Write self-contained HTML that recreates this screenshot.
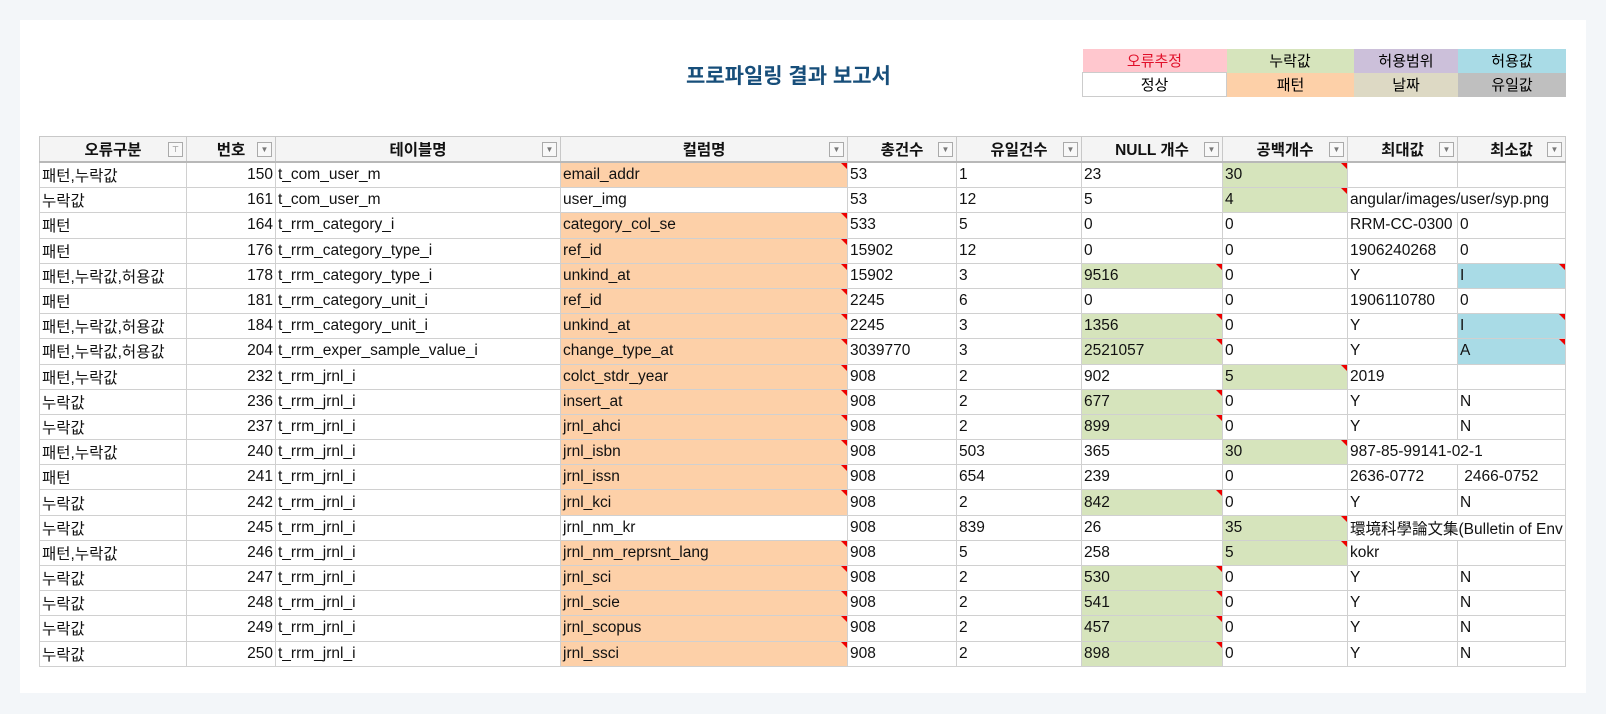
<!DOCTYPE html>
<html><head><meta charset="utf-8"><style>
body{margin:0;background:#f3f6f9;width:1606px;height:714px;overflow:hidden;font-family:"Liberation Sans","Noto Sans CJK KR",sans-serif;}
.card{position:absolute;left:20px;top:20px;width:1566px;height:673px;background:#fff;}
.title{position:absolute;left:686px;top:60px;font-size:21px;font-weight:bold;color:#174e7a;}
.leg{position:absolute;left:1082px;top:49px;border-collapse:collapse;font-size:15px;}
.leg td{text-align:center;padding:0;}
table.t{position:absolute;left:39px;top:136px;width:1526px;border-collapse:collapse;table-layout:fixed;font-size:15.5px;color:#111;}
.t td{height:24.2px;padding:0 2px;border:1px solid #d0d0d0;white-space:nowrap;overflow:visible;position:relative;}
.t th{height:22px;border:1px solid #c8c8c8;border-bottom:2px solid #b8b8b8;background:#f4f4f4;font-weight:bold;position:relative;text-align:center;font-size:15.5px;}
.dd{position:absolute;right:3px;top:5px;width:13px;height:13px;border:1px solid #aaa;background:#f8f8f8;font-size:8px;line-height:13px;color:#777;text-align:center;font-weight:normal;}
.r{text-align:right;}
.o{background:#fdd0a8;}.g{background:#d6e4bc;}.b{background:#a9dbe6;}
.tri::after{content:"";position:absolute;right:0;top:0;border-top:6px solid #e00;border-left:6px solid transparent;}
</style></head><body>
<div class="card"></div>
<div class="title">프로파일링 결과 보고서</div>
<table class="leg">
<tr><td style="width:144px;height:23px;background:#ffc7ce;color:#e0102a">오류추정</td><td style="width:127px;background:#d6e4bc">누락값</td><td style="width:104px;background:#ccc0da">허용범위</td><td style="width:108px;background:#a9dbe6">허용값</td></tr>
<tr><td style="height:23px;background:#fff;border:1px solid #ccc">정상</td><td style="background:#fdd0a8">패턴</td><td style="background:#ddd9c4">날짜</td><td style="background:#bfbfbf">유일값</td></tr>
</table>
<table class="t">
<colgroup><col style="width:147px"><col style="width:89px"><col style="width:285px"><col style="width:287px"><col style="width:109px"><col style="width:125px"><col style="width:141px"><col style="width:125px"><col style="width:110px"><col style="width:108px"></colgroup>
<tr><th>오류구분<span class="dd">⊤</span></th><th>번호<span class="dd">▼</span></th><th>테이블명<span class="dd">▼</span></th><th>컬럼명<span class="dd">▼</span></th><th>총건수<span class="dd">▼</span></th><th>유일건수<span class="dd">▼</span></th><th>NULL 개수<span class="dd">▼</span></th><th>공백개수<span class="dd">▼</span></th><th>최대값<span class="dd">▼</span></th><th>최소값<span class="dd">▼</span></th></tr>
<tr><td>패턴,누락값</td><td class="r">150</td><td>t_com_user_m</td><td class="o tri">email_addr</td><td>53</td><td>1</td><td>23</td><td class="g tri">30</td><td></td><td></td></tr>
<tr><td>누락값</td><td class="r">161</td><td>t_com_user_m</td><td>user_img</td><td>53</td><td>12</td><td>5</td><td class="g tri">4</td><td style="border-right:none">angular/images/user/syp.png</td><td style="border-left:none"></td></tr>
<tr><td>패턴</td><td class="r">164</td><td>t_rrm_category_i</td><td class="o tri">category_col_se</td><td>533</td><td>5</td><td>0</td><td>0</td><td>RRM-CC-0300</td><td>0</td></tr>
<tr><td>패턴</td><td class="r">176</td><td>t_rrm_category_type_i</td><td class="o tri">ref_id</td><td>15902</td><td>12</td><td>0</td><td>0</td><td>1906240268</td><td>0</td></tr>
<tr><td>패턴,누락값,허용값</td><td class="r">178</td><td>t_rrm_category_type_i</td><td class="o tri">unkind_at</td><td>15902</td><td>3</td><td class="g tri">9516</td><td>0</td><td>Y</td><td class="b tri">I</td></tr>
<tr><td>패턴</td><td class="r">181</td><td>t_rrm_category_unit_i</td><td class="o tri">ref_id</td><td>2245</td><td>6</td><td>0</td><td>0</td><td>1906110780</td><td>0</td></tr>
<tr><td>패턴,누락값,허용값</td><td class="r">184</td><td>t_rrm_category_unit_i</td><td class="o tri">unkind_at</td><td>2245</td><td>3</td><td class="g tri">1356</td><td>0</td><td>Y</td><td class="b tri">I</td></tr>
<tr><td>패턴,누락값,허용값</td><td class="r">204</td><td>t_rrm_exper_sample_value_i</td><td class="o tri">change_type_at</td><td>3039770</td><td>3</td><td class="g tri">2521057</td><td>0</td><td>Y</td><td class="b tri">A</td></tr>
<tr><td>패턴,누락값</td><td class="r">232</td><td>t_rrm_jrnl_i</td><td class="o tri">colct_stdr_year</td><td>908</td><td>2</td><td>902</td><td class="g tri">5</td><td>2019</td><td></td></tr>
<tr><td>누락값</td><td class="r">236</td><td>t_rrm_jrnl_i</td><td class="o tri">insert_at</td><td>908</td><td>2</td><td class="g tri">677</td><td>0</td><td>Y</td><td>N</td></tr>
<tr><td>누락값</td><td class="r">237</td><td>t_rrm_jrnl_i</td><td class="o tri">jrnl_ahci</td><td>908</td><td>2</td><td class="g tri">899</td><td>0</td><td>Y</td><td>N</td></tr>
<tr><td>패턴,누락값</td><td class="r">240</td><td>t_rrm_jrnl_i</td><td class="o tri">jrnl_isbn</td><td>908</td><td>503</td><td>365</td><td class="g tri">30</td><td style="border-right:none">987-85-99141-02-1</td><td style="border-left:none"></td></tr>
<tr><td>패턴</td><td class="r">241</td><td>t_rrm_jrnl_i</td><td class="o tri">jrnl_issn</td><td>908</td><td>654</td><td>239</td><td>0</td><td>2636-0772</td><td>&nbsp;2466-0752</td></tr>
<tr><td>누락값</td><td class="r">242</td><td>t_rrm_jrnl_i</td><td class="o tri">jrnl_kci</td><td>908</td><td>2</td><td class="g tri">842</td><td>0</td><td>Y</td><td>N</td></tr>
<tr><td>누락값</td><td class="r">245</td><td>t_rrm_jrnl_i</td><td>jrnl_nm_kr</td><td>908</td><td>839</td><td>26</td><td class="g tri">35</td><td colspan="2" style="overflow:hidden">環境科學論文集(Bulletin of Env</td></tr>
<tr><td>패턴,누락값</td><td class="r">246</td><td>t_rrm_jrnl_i</td><td class="o tri">jrnl_nm_reprsnt_lang</td><td>908</td><td>5</td><td>258</td><td class="g tri">5</td><td>kokr</td><td></td></tr>
<tr><td>누락값</td><td class="r">247</td><td>t_rrm_jrnl_i</td><td class="o tri">jrnl_sci</td><td>908</td><td>2</td><td class="g tri">530</td><td>0</td><td>Y</td><td>N</td></tr>
<tr><td>누락값</td><td class="r">248</td><td>t_rrm_jrnl_i</td><td class="o tri">jrnl_scie</td><td>908</td><td>2</td><td class="g tri">541</td><td>0</td><td>Y</td><td>N</td></tr>
<tr><td>누락값</td><td class="r">249</td><td>t_rrm_jrnl_i</td><td class="o tri">jrnl_scopus</td><td>908</td><td>2</td><td class="g tri">457</td><td>0</td><td>Y</td><td>N</td></tr>
<tr><td>누락값</td><td class="r">250</td><td>t_rrm_jrnl_i</td><td class="o tri">jrnl_ssci</td><td>908</td><td>2</td><td class="g tri">898</td><td>0</td><td>Y</td><td>N</td></tr>
</table>
</body></html>
